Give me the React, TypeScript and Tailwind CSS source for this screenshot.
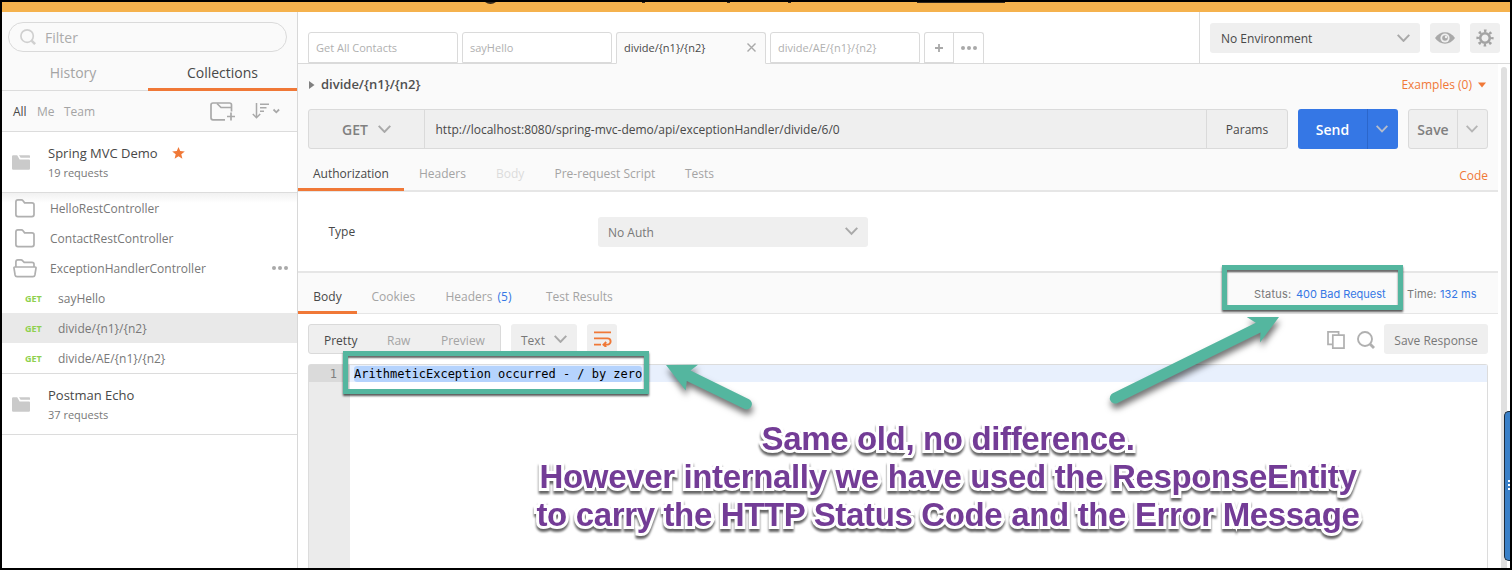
import React from "react";

const Chevron = ({ className = "", w = 13 }: { className?: string; w?: number }) => (
  <svg width={w} height={w * 0.62} viewBox="0 0 12 7.5" fill="none" className={className}>
    <path d="M.6.8L6 6.4 11.4.8" stroke="currentColor" strokeWidth="1.9" />
  </svg>
);

const Dots = ({ className = "" }: { className?: string }) => (
  <svg width="16" height="4" viewBox="0 0 16 4" fill="currentColor" className={className}>
    <circle cx="2" cy="2" r="2" />
    <circle cx="8" cy="2" r="2" />
    <circle cx="14" cy="2" r="2" />
  </svg>
);

const Search = ({ size = 16, className = "" }: { size?: number; className?: string }) => (
  <svg width={size} height={size} viewBox="0 0 18 18" fill="none" stroke="currentColor" className={className}>
    <circle cx="8" cy="8" r="7" strokeWidth="1.9" />
    <path d="M13 13l4 4" strokeWidth="2.8" />
  </svg>
);

const SolidFolder = () => (
  <svg width="18" height="15" viewBox="0 0 18 15" fill="#cacaca">
    <path d="M0 1.500Q0 .3 1.200.3H5.200L7.600 4.600H17Q18 4.600 18 5.600V13.500Q18 14.700 16.800 14.700H1.200Q0 14.700 0 13.500Z" />
    <path d="M7 .3H17.200Q18 .3 18 1V2.800H8.600Z" />
  </svg>
);

const Folder = () => (
  <svg width="20" height="19" viewBox="0 0 20 19" fill="none" stroke="#b0b0b0" strokeWidth="1.7">
    <path d="M.9 3Q.9.9 2.900.9H6.500Q7.400.9 8 1.700L9.600 3.800H17Q19 3.800 19 5.800V15.600Q19 17.600 17 17.600H2.900Q.9 17.600.9 15.600Z" />
  </svg>
);

const OpenFolder = () => (
  <svg width="24" height="19" viewBox="0 0 24 19" fill="none" stroke="#b0b0b0" strokeWidth="1.7">
    <path d="M2.900 8V3Q2.900.9 4.900.9H8Q8.900.9 9.500 1.600L11.200 3.400H19Q21 3.400 21 5.200V8" />
    <path d="M2 8H22Q23.200 8 23 9.200L21.900 16Q21.600 17.600 20 17.600H4Q2.400 17.600 2.100 16L1 9.200Q.8 8 2 8Z" />
  </svg>
);

const GetTag = () => <span className="w-[33px] text-[9px] font-bold text-[#8fd14f]">GET</span>;

const Request = ({ name, active = false }: { name: string; active?: boolean }) => (
  <div className={`flex h-[30px] items-center pl-[23px] ${active ? "bg-[#e9e9e9]" : ""}`}>
    <GetTag />
    <span className="pt-[2px] text-[12px] text-[#787878]">{name}</span>
  </div>
);

const FolderRow = ({ name, open = false }: { name: string; open?: boolean }) => (
  <div className={`flex h-[30px] items-center pr-[9px] ${open ? "pl-[11px]" : "pl-[13px]"}`}>
    {open ? <OpenFolder /> : <Folder />}
    <span className={`flex-1 pt-[2px] text-[12px] text-[#787878] ${open ? "ml-[13px]" : "ml-[15px]"}`}>{name}</span>
    {open && <Dots className="text-[#a9a9a9]" />}
  </div>
);

const Collection = ({ name, count, star = false }: { name: string; count: string; star?: boolean }) => (
  <div className="flex h-[60px] items-center pl-[10px]">
    <SolidFolder />
    <div className="ml-[18px] flex flex-col gap-[7px]">
      <div className="flex h-[14px] items-center gap-[14px] text-[13px] text-[#484848]">
        {name}
        {star && (
          <svg width="13" height="12" viewBox="0 0 13 12" fill="#f07837">
            <path d="M6.500 0l1.700 4.100 4.600.3-3.500 2.900 1.100 4.500-3.900-2.500-3.900 2.500 1.100-4.500L.2 4.400l4.600-.3z" />
          </svg>
        )}
      </div>
      <span className="text-[11px] text-[#787878]">{count}</span>
    </div>
  </div>
);

function Sidebar() {
  return (
    <aside className="flex w-[296px] shrink-0 flex-col border-r border-[#d8d8d8] bg-white">
      <div className="flex flex-col border-b border-[#dcdcdc] bg-[#fafafa]">
        <div className="mx-[6px] mr-[10px] mt-[10px] flex h-[30px] items-center rounded-full border border-[#dadada] pl-[11px]">
          <Search size={16} className="text-[#d0d0d0]" />
          <span className="ml-[9px] pt-px text-[14px] text-[#acacac]">Filter</span>
        </div>
        <div className="flex h-[39px] border-b border-[#dcdcdc] text-[14px]">
          <div className="flex w-[146px] items-center justify-center pt-[3px] pr-[4px] text-[#a4a4a4]">History</div>
          <div className="-mb-px flex flex-1 items-center justify-center border-b-3 border-[#f07837] pt-[6px] text-[#484848]">Collections</div>
        </div>
        <div className="flex h-[40px] items-center pl-[11px] text-[12px] text-[#a4a4a4]">
          <span className="w-[24px] pt-[2px] text-[#484848]">All</span>
          <span className="w-[27px] pt-[2px]">Me</span>
          <span className="flex-1 pt-[2px]">Team</span>
          <svg width="26" height="20" viewBox="0 0 26 20" fill="none" stroke="#a9a9a9" strokeWidth="1.7" className="mt-[2px]">
            <path d="M15 17.800H3Q1 17.800 1 15.800V3Q1 1 3 1H19.500Q21.500 1 21.500 3V9.500" />
            <path d="M7 1.500l4 4H21.500M21 10.500v8M17 14.500h8" />
          </svg>
          <svg width="28" height="18" viewBox="0 0 28 18" fill="none" stroke="#a9a9a9" strokeWidth="1.5" className="ml-[16px] mr-[17px]">
            <path d="M4.500 1v14.500M.8 12l3.700 3.700L8.200 12M8 2.200h9M8 5.700h6.500M8 9.200h4" />
            <path d="M21.500 7.500l2.800 2.800 2.800-2.800" strokeWidth="1.8" />
          </svg>
        </div>
      </div>
      <Collection name="Spring MVC Demo" count="19 requests" star />
      <div className="flex flex-col border-y border-[#dcdcdc] bg-gradient-to-b from-[#f1f1f1] to-white to-[10px]">
        <FolderRow name="HelloRestController" />
        <FolderRow name="ContactRestController" />
        <FolderRow name="ExceptionHandlerController" open />
        <Request name="sayHello" />
        <Request name="divide/{n1}/{n2}" active />
        <Request name="divide/AE/{n1}/{n2}" />
      </div>
      <Collection name="Postman Echo" count="37 requests" />
      <div className="border-t border-[#dcdcdc]" />
    </aside>
  );
}

const Tab = ({ name, active = false }: { name: string; active?: boolean }) => (
  <div
    className={`flex w-[150px] items-center justify-between rounded-t-[3px] border border-[#dadada] pr-[9px] pl-[7px] text-[11px] ${
      active ? "-mb-px h-[32px] border-b-[#fafafa] bg-[#fafafa] pb-[2px] text-[#484848]" : "h-[31px] bg-white text-[#b0b0b0]"
    }`}
  >
    {name}
    {active && (
      <svg width="9" height="9" viewBox="0 0 9 9" stroke="#a9a9a9" strokeWidth="1.4">
        <path d="M.5.5l8 8M8.500.5l-8 8" />
      </svg>
    )}
  </div>
);

function TopBar() {
  return (
    <div className="flex h-[52px] shrink-0 border-b border-[#dadada] bg-white">
      <div className="flex flex-1 items-end gap-[4px] pl-[10px]">
        <Tab name="Get All Contacts" />
        <Tab name="sayHello" />
        <Tab name="divide/{n1}/{n2}" active />
        <Tab name="divide/AE/{n1}/{n2}" />
        <div className="flex h-[31px] w-[60px] rounded-t-[3px] border border-b-0 border-[#dadada] text-[#a9a9a9]">
          <div className="flex flex-1 items-center justify-center border-r border-b border-[#dadada]">
            <svg width="8" height="8" viewBox="0 0 8 8" stroke="currentColor" strokeWidth="1.8">
              <path d="M4 0v8M0 4h8" />
            </svg>
          </div>
          <div className="flex w-[29px] items-center justify-center">
            <Dots />
          </div>
        </div>
      </div>
      <div className="flex w-[311px] gap-[10px] border-l border-[#dadada] pt-[11px] pl-[10px]">
        <div className="flex h-[30px] w-[210px] items-center justify-between rounded-[3px] bg-[#efefef] pr-[10px] pl-[11px] text-[12px] text-[#484848]">
          <span className="pt-[2px]">No Environment</span>
          <Chevron className="text-[#a9a9a9]" />
        </div>
        <div className="flex size-[30px] items-center justify-center rounded-[3px] bg-[#efefef]">
          <svg width="20" height="12" viewBox="0 0 20 12">
            <path d="M0 6Q4 .3 10 .3T20 6Q16 11.700 10 11.700T0 6Z" fill="#a9a9a9" />
            <circle cx="10" cy="6" r="4.600" fill="#efefef" />
            <circle cx="10" cy="6" r="2.800" fill="#a9a9a9" />
            <circle cx="11" cy="5" r="1.200" fill="#efefef" />
          </svg>
        </div>
        <div className="flex size-[30px] items-center justify-center rounded-[3px] bg-[#efefef]">
          <svg width="18" height="18" viewBox="-9 -9 18 18" fill="none" stroke="#a3a3a3">
            <circle r="4.800" strokeWidth="2.600" />
            <circle r="7.200" strokeWidth="2.800" strokeDasharray="2.5 3.155" strokeDashoffset="1.25" />
          </svg>
        </div>
      </div>
    </div>
  );
}

function Builder() {
  return (
    <section className="flex h-[128px] shrink-0 flex-col border-b-2 border-[#e6e6e6] bg-[#fafafa]">
      <div className="flex h-[45px] items-center pr-[12px] pb-[4px] pl-[11px]">
        <svg width="6" height="8" viewBox="0 0 6 8" fill="#808080">
          <path d="M0 0l5.500 4L0 8z" />
        </svg>
        <span className="ml-[6px] flex-1 text-[13px] font-semibold text-[#505050]">divide/{"{n1}"}/{"{n2}"}</span>
        <span className="pt-px text-[12px] text-[#f07837]">Examples (0)</span>
        <svg width="8" height="6" viewBox="0 0 8 6" fill="#f07837" className="ml-[6px]">
          <path d="M0 .5h8L4 5.500z" />
        </svg>
      </div>
      <div className="flex h-[40px] pr-[10px] pl-[10px]">
        <div className="flex w-[980px] rounded-[3px] border border-[#dadada] bg-[#efefef]">
          <div className="flex w-[116px] items-center border-r border-[#dadada] pl-[33px] text-[14px] font-semibold text-[#808080]">
            <span className="pt-px">GET</span>
            <Chevron className="ml-[10px] text-[#a9a9a9]" />
          </div>
          <div className="flex flex-1 items-center pt-[2px] pl-[10.5px] text-[12px] text-[#484848]">
            http://localhost:8080/spring-mvc-demo/api/exceptionHandler/divide/6/0
          </div>
          <div className="flex w-[81px] items-center justify-center border-l border-[#dadada] pt-[2px] text-[12px] text-[#484848]">Params</div>
        </div>
        <div className="ml-[10px] flex w-[100px] rounded-[3px] bg-[#3577e5] text-[14px] font-semibold text-white">
          <div className="flex w-[70px] items-center justify-center border-r border-[#2b66cb] pt-[2px]">Send</div>
          <div className="flex flex-1 items-center justify-center pr-[2px] text-[#b5bccb]">
            <Chevron w={12} />
          </div>
        </div>
        <div className="ml-[10px] flex w-[80px] rounded-[3px] border border-[#dadada] bg-[#efefef] text-[14px] font-semibold text-[#808080]">
          <div className="flex w-[49px] items-center justify-center border-r border-[#dadada] pt-[2px]">Save</div>
          <div className="flex flex-1 items-center justify-center pr-[2px] text-[#b5b5b5]">
            <Chevron w={12} />
          </div>
        </div>
      </div>
      <div className="-mb-px flex h-[42px] pr-[10px] text-[12px] text-[#a4a4a4]">
        <div className="flex w-[106px] items-center justify-center border-b-3 border-[#f07837] pt-[10px] text-[#484848]">Authorization</div>
        <div className="flex flex-1 items-center pt-[8px]">
          <span className="ml-[15px] w-[77px]">Headers</span>
          <span className="w-[58.5px] text-[#dcdcdc]">Body</span>
          <span className="w-[130.5px]">Pre-request Script</span>
          <span className="flex-1">Tests</span>
          <span className="pt-[3px] text-[#f07837]">Code</span>
        </div>
      </div>
    </section>
  );
}

function Response() {
  return (
    <>
      <div className="flex h-[43px] shrink-0 border-t-2 border-b-1 border-[#e6e6e6] bg-[#fafafa] text-[12px] text-[#a4a4a4]">
        <div className="-mb-px flex w-[59px] items-center justify-center border-b-3 border-[#f07837] pt-[10px] text-[#484848]">Body</div>
        <div className="flex flex-1 items-center pt-[8px]">
          <span className="ml-[14.5px] w-[74px]">Cookies</span>
          <span className="w-[100.5px]">
            Headers <span className="ml-[2px] text-[#3577e5]">(5)</span>
          </span>
          <span className="flex-1">Test Results</span>
          <div className="flex pr-[20px] pb-[6px] font-[Inter] text-[11px] text-[#787878]">
            <span className="w-[42px] tracking-[0.2px]">Status:</span>
            <span className="w-[111px] text-[#3577e5]">400 Bad Request</span>
            <span className="w-[33px] tracking-[0.1px]">Time:</span>
            <span className="w-[38px] text-[#3577e5]">132 ms</span>
          </div>
        </div>
      </div>
      <div className="flex h-[50px] shrink-0 items-center px-[10px] text-[12px] text-[#787878]">
        <div className="flex h-[30px] w-[193px] items-center rounded-[3px] border border-[#dadada] bg-[#efefef] pt-[3px] pl-[15px] text-[#a4a4a4]">
          <span className="w-[63px] text-[#484848]">Pretty</span>
          <span className="w-[54px]">Raw</span>
          <span>Preview</span>
        </div>
        <div className="ml-[10px] flex h-[30px] w-[66px] items-center justify-between rounded-[3px] bg-[#efefef] px-[10px]">
          <span className="pt-[3px]">Text</span>
          <Chevron className="text-[#a9a9a9]" />
        </div>
        <div className="ml-[10px] flex size-[30px] items-center justify-center rounded-[3px] bg-[#efefef] pl-px">
          <svg width="18" height="16" viewBox="0 0 18 16" fill="none" stroke="#f07837" strokeWidth="1.900">
            <path d="M0 1.400h17M0 7.400h13.500a3.100 3.100 0 0 1 0 6.200H10M0 13.600h7M12.200 11l-2.700 2.600 2.700 2.400" />
          </svg>
        </div>
        <div className="flex-1" />
        <svg width="18" height="18" viewBox="0 0 18 18" fill="none" stroke="#b0b0b0" strokeWidth="1.700" className="mt-px">
          <path d="M5 13.400H1V.9h10.600V4" />
          <path d="M5.800 4.200H17v13H5.800z" />
        </svg>
        <Search size={18} className="mt-px ml-[12px] mr-[9px] text-[#b0b0b0]" />
        <div className="flex h-[30px] w-[104px] items-center justify-center rounded-[3px] bg-[#efefef] pt-[3px]">Save Response</div>
      </div>
      <div className="mx-[10px] flex flex-1 rounded-t-[3px] border border-b-0 border-[#dcdcdc] bg-white font-['DejaVu_Sans_Mono'] text-[12px]">
        <div className="w-[41px] bg-[#ebebeb]">
          <div className="flex h-[17px] items-center justify-end bg-[#dadada] pr-[13px] text-[#808080]">1</div>
        </div>
        <div className="flex-1">
          <div className="flex h-[17px] items-center bg-[#e8f0fd] pl-[4px]">
            <span className="rounded-[3px] bg-[#b5d3fd] py-[2px] tracking-[-0.02px] text-black">ArithmeticException occurred - / by zero</span>
          </div>
        </div>
      </div>
    </>
  );
}

function Annotations() {
  return (
    <div className="pointer-events-none absolute inset-0">
      <div className="absolute top-[351px] left-[343px] h-[43px] w-[306px] border-5 border-[#54b69f] shadow-[0_2px_2px_rgba(0,0,0,0.65),inset_0_2px_2px_rgba(0,0,0,0.6)]" />
      <div className="absolute top-[265px] left-[1222px] h-[45px] w-[181px] border-5 border-[#54b69f] shadow-[0_2px_2px_rgba(0,0,0,0.65),inset_0_2px_2px_rgba(0,0,0,0.6)]" />
      <svg width="1512" height="570" className="absolute inset-0 drop-shadow-[1px_5px_3px_rgba(0,0,0,0.55)]" fill="#54b69f">
        <path d="M666 365L698 364.700L690.500 370.500L749 399.200A5.400 5.400 0 0 1 744.500 409L686.800 381L685.700 390.500Z" />
        <path d="M1279 317L1246.700 317L1255.800 322.800L1112.800 393.300A5.400 5.400 0 0 0 1117.600 403L1260.500 332.500L1260 342.500Z" />
      </svg>
      <div className="absolute top-[420px] left-[448px] w-[1000px] text-center font-['Liberation_Sans'] text-[33px] leading-[38px] font-bold tracking-[-0.35px] whitespace-nowrap text-[#733c96] [paint-order:stroke_fill] drop-shadow-[0_3px_1px_rgba(0,0,0,0.6)] [-webkit-text-stroke:6px_white]">
        Same old, no difference.
        <br />
        However internally we have used the ResponseEntity
        <br />
        to carry the HTTP Status Code and the Error Message
      </div>
      <div className="absolute top-[411px] right-[2px] h-[150px] w-[6px] rounded-l-[5px] border border-r-0 border-[#1c2c3c] bg-[#3a80c8]">
        <div className="mt-[68px] ml-[3px] flex flex-col gap-[2px]">
          <i className="h-[2px] bg-white" />
          <i className="h-[2px] bg-white" />
          <i className="h-[2px] bg-white" />
        </div>
      </div>
    </div>
  );
}

export default function App() {
  return (
    <div className="relative h-[570px] w-[1512px] overflow-hidden bg-black p-[2px] font-['Open_Sans',sans-serif] leading-none whitespace-nowrap">
      <div className="flex h-[566px] flex-col bg-white">
        <div className="h-[10px] shrink-0 bg-[#f5b24d]">
          <svg width="1508" height="3" fill="#33291c" className="block">
            <path d="M483 0h11q-5.500 4-11 0zM640 0h3v1h-3zM725 0h3v1h-3zM786 0h3v1h-3zM915 0h88v1h-88z" />
          </svg>
        </div>
        <div className="flex min-h-0 flex-1">
          <Sidebar />
          <main className="flex min-w-0 flex-1 flex-col">
            <TopBar />
            <div className="flex min-h-0 flex-1">
              <div className="flex w-[1200px] flex-col">
                <Builder />
                <div className="flex h-[79px] shrink-0 items-center pl-[30.5px] text-[12px]">
                  <span className="w-[269.5px] pt-px text-[#484848]">Type</span>
                  <div className="flex h-[30px] w-[270px] items-center justify-between rounded-[3px] bg-[#efefef] px-[10px] text-[#787878]">
                    <span className="pt-[2px]">No Auth</span>
                    <Chevron className="text-[#a9a9a9]" />
                  </div>
                </div>
                <Response />
              </div>
              <div className="ml-[3px] mt-[3px] w-[6px] rounded-t-full bg-[#e0e0e0]" />
            </div>
          </main>
        </div>
      </div>
      <Annotations />
    </div>
  );
}
